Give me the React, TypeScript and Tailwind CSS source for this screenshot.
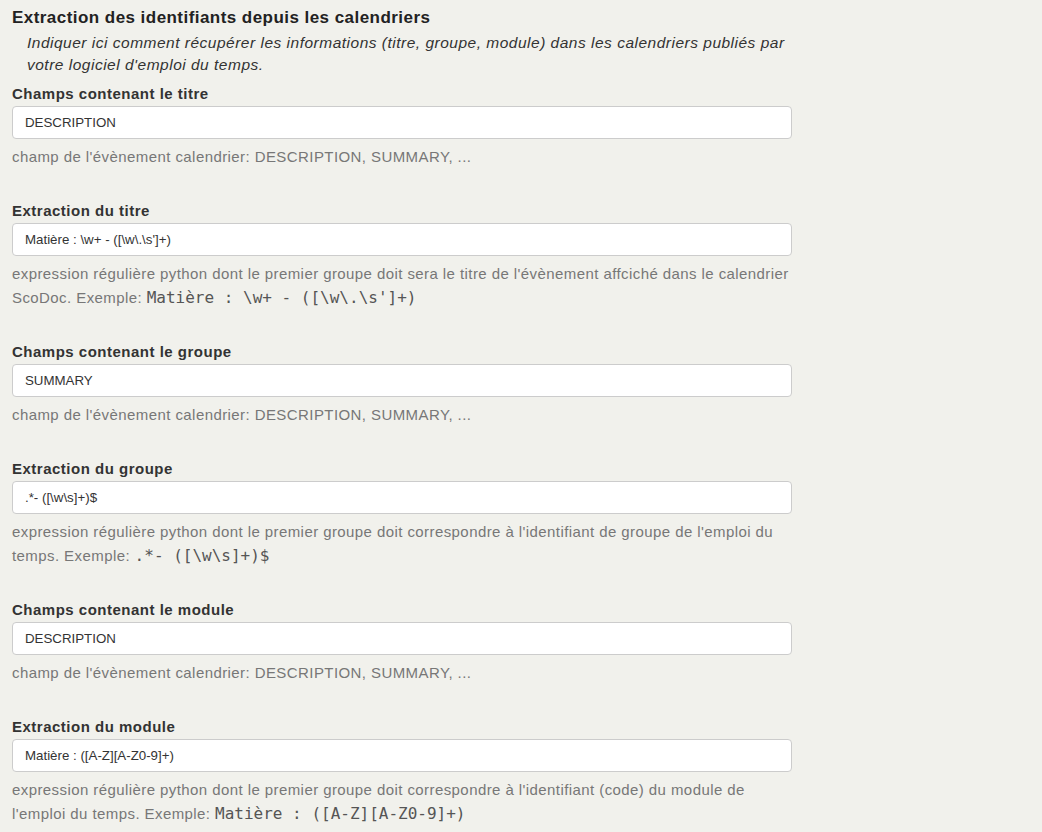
import React from "react";

const sans = { fontFamily: '"Liberation Sans", Arial, Helvetica, sans-serif' };

type Sec = { label: string; value: string; help: React.ReactNode };

const Mono = ({ children }: { children: React.ReactNode }) => (
  <span className="font-['DejaVu_Sans_Mono',monospace] text-[16px] tracking-normal text-[#555]">{children}</span>
);

const sections: Sec[] = [
  {
    label: "Champs contenant le titre",
    value: "DESCRIPTION",
    help: <>champ de l'évènement calendrier: DESCRIPTION, SUMMARY, ...</>,
  },
  {
    label: "Extraction du titre",
    value: "Matière : \\w+ - ([\\w\\.\\s']+)",
    help: (
      <>
        expression régulière python dont le premier groupe doit sera le titre de l'évènement affciché dans le calendrier
        <br />
        ScoDoc. Exemple: <Mono>{"Matière : \\w+ - ([\\w\\.\\s']+)"}</Mono>
      </>
    ),
  },
  {
    label: "Champs contenant le groupe",
    value: "SUMMARY",
    help: <>champ de l'évènement calendrier: DESCRIPTION, SUMMARY, ...</>,
  },
  {
    label: "Extraction du groupe",
    value: ".*- ([\\w\\s]+)$",
    help: (
      <>
        expression régulière python dont le premier groupe doit correspondre à l'identifiant de groupe de l'emploi du
        <br />
        temps. Exemple: <Mono>{".*- ([\\w\\s]+)$"}</Mono>
      </>
    ),
  },
  {
    label: "Champs contenant le module",
    value: "DESCRIPTION",
    help: <>champ de l'évènement calendrier: DESCRIPTION, SUMMARY, ...</>,
  },
  {
    label: "Extraction du module",
    value: "Matière : ([A-Z][A-Z0-9]+)",
    help: (
      <>
        expression régulière python dont le premier groupe doit correspondre à l'identifiant (code) du module de
        <br />
        l'emploi du temps. Exemple: <Mono>{"Matière : ([A-Z][A-Z0-9]+)"}</Mono>
      </>
    ),
  },
];

export default function App() {
  return (
    <div className="min-h-[832px] w-full bg-[#f1f1ec] overflow-hidden" style={sans}>
      <div className="pl-3 pt-2 w-[792px]">
        <div className="text-[17px] font-bold leading-5 tracking-[0.45px] text-[#222]">
          Extraction des identifiants depuis les calendriers
        </div>
        <div className="mt-1 pl-[15px] text-[15.5px] italic leading-[22px] tracking-[0.5px] text-[#333] whitespace-nowrap">
          Indiquer ici comment récupérer les informations (titre, groupe, module) dans les calendriers publiés par
          <br />
          votre logiciel d'emploi du temps.
        </div>
        <div className="mt-2">
          {sections.map((s, i) => (
            <div key={i} className="mb-8">
              <div className="text-[15px] font-bold leading-5 tracking-[0.5px] text-[#333]">{s.label}</div>
              <div className="mt-0.5 h-[33px] w-[780px] rounded-[4px] border border-[#cccccc] bg-white pl-3 flex items-center text-[13.3px] text-[#333]">
                {s.value}
              </div>
              <div className="mt-1.5 text-[15px] leading-6 tracking-[0.42px] text-[#777] whitespace-nowrap">{s.help}</div>
            </div>
          ))}
        </div>
      </div>
    </div>
  );
}
